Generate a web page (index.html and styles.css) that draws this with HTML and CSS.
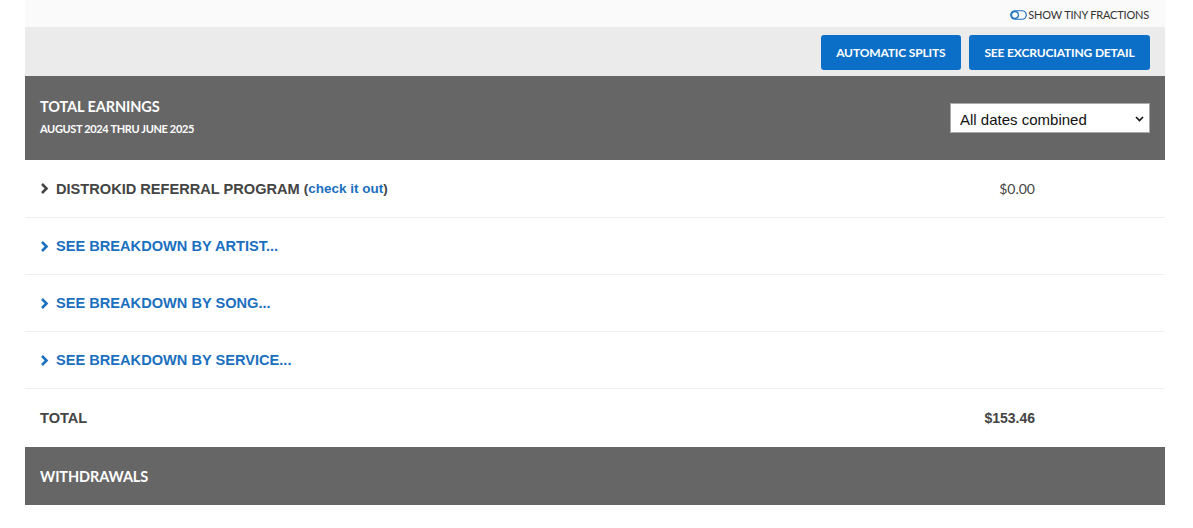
FILE: index.html
```html
<!DOCTYPE html>
<html>
<head>
<meta charset="utf-8">
<link rel="stylesheet" href="styles.css">
</head>
<body>
<div class="wrap">
  <div class="topbar">
    <span class="toggle">
      <svg width="17" height="10" viewBox="0 0 17 10"><rect x="0.75" y="0.75" width="15.5" height="8.5" rx="4.25" fill="none" stroke="#1a6fbf" stroke-width="1.2"/><circle cx="5" cy="5" r="3.4" fill="none" stroke="#1a6fbf" stroke-width="1.2"/></svg>
      SHOW TINY FRACTIONS
    </span>
  </div>
  <div class="toolbar">
    <button class="btn">AUTOMATIC SPLITS</button>
    <button class="btn">SEE EXCRUCIATING DETAIL</button>
  </div>
  <div class="section-head">
    <div class="titles">
      <div class="title">TOTAL EARNINGS</div>
      <div class="subtitle">AUGUST 2024 THRU JUNE 2025</div>
    </div>
    <div class="select">
      <span>All dates combined</span>
      <svg width="9" height="6" viewBox="0 0 9 6"><path d="M1 1 L4.5 4.5 L8 1" fill="none" stroke="#111" stroke-width="1.6"/></svg>
    </div>
  </div>
  <div class="row first">
    <div class="label dark"><svg class="chev" width="9" height="13" viewBox="0 0 9 13"><path d="M2 2 L6.5 6.5 L2 11" fill="none" stroke="currentColor" stroke-width="2.6"/></svg>DISTROKID REFERRAL PROGRAM <span class="paren">(<a class="link">check it out</a>)</span></div>
    <div class="amount">$0.00</div>
  </div>
  <div class="row">
    <div class="label blue"><svg class="chev" width="9" height="13" viewBox="0 0 9 13"><path d="M2 2 L6.5 6.5 L2 11" fill="none" stroke="currentColor" stroke-width="2.6"/></svg>SEE BREAKDOWN BY ARTIST...</div>
  </div>
  <div class="row">
    <div class="label blue"><svg class="chev" width="9" height="13" viewBox="0 0 9 13"><path d="M2 2 L6.5 6.5 L2 11" fill="none" stroke="currentColor" stroke-width="2.6"/></svg>SEE BREAKDOWN BY SONG...</div>
  </div>
  <div class="row">
    <div class="label blue"><svg class="chev" width="9" height="13" viewBox="0 0 9 13"><path d="M2 2 L6.5 6.5 L2 11" fill="none" stroke="currentColor" stroke-width="2.6"/></svg>SEE BREAKDOWN BY SERVICE...</div>
  </div>
  <div class="row total">
    <div class="label dark">TOTAL</div>
    <div class="amount bold">$153.46</div>
  </div>
  <div class="section-head small">
    <div class="title">WITHDRAWALS</div>
  </div>
</div>
</body>
</html>
```
FILE: styles.css
```css
* { box-sizing: border-box; }
html, body { margin: 0; padding: 0; background: #fff; }
body { font-family: Lato, "Liberation Sans", sans-serif; }
.wrap { width: 1140px; margin: 0 0 0 25px; }
.topbar {
  height: 27px;
  background: #fafafa;
  display: flex;
  justify-content: flex-end;
  align-items: center;
  padding-right: 16px;
  padding-top: 2px;
}
.toggle {
  display: flex;
  align-items: center;
  gap: 1px;
  font-size: 11px;
  color: #333;
  letter-spacing: -0.2px;
}
.toolbar {
  height: 49px;
  background: #ebebeb;
  display: flex;
  justify-content: flex-end;
  align-items: flex-start;
  gap: 8px;
  padding: 8px 15px 0 0;
}
.btn {
  height: 35px;
  border: 0;
  border-radius: 3px;
  background: #0b6fc7;
  color: #fff;
  font-family: Lato, sans-serif;
  font-weight: 700;
  font-size: 12px;
  padding: 0 15.5px;
  letter-spacing: -0.15px;
}
.section-head {
  background: #666;
  height: 84px;
  display: flex;
  justify-content: space-between;
  align-items: center;
  padding: 0 15px;
  color: #fff;
}
.section-head.small { height: 58px; }
.title { font-size: 14.5px; font-weight: 700; letter-spacing: -0.1px; }
.titles { padding-top: 2px; }
.titles .title { margin-top: -6px; }
.subtitle { font-size: 11px; font-weight: 700; margin-top: 7px; letter-spacing: -0.35px; }
.select {
  width: 200px;
  height: 30px;
  background: #fff;
  border: 1px solid #aaa;
  color: #111;
  display: flex;
  justify-content: space-between;
  align-items: center;
  padding: 2px 5px 0 9px;
  font-family: "Liberation Sans", Arial, sans-serif;
  font-size: 15px;
}
.row {
  height: 57px;
  display: flex;
  align-items: center;
  justify-content: space-between;
  padding: 0 130px 0 15px;
  border-bottom: 1px solid #efefef;
}
.row.first { height: 58px; }
.row.total { height: 58px; border-bottom: 0; }
.label {
  font-family: "Liberation Sans", Arial, sans-serif;
  font-weight: 700;
  font-size: 14.6px;
  display: flex;
  align-items: center;
}
.label.dark { color: #444; }
.label.blue { color: #1a6fbf; }
.chev { margin-right: 7px; }
.paren { margin-left: 4px; font-size: 13.5px; }
.link { color: #1a6fbf; }
.amount { font-size: 14px; color: #444; }
.amount.bold { font-family: "Liberation Sans", Arial, sans-serif; font-weight: 700; color: #444; }
```
